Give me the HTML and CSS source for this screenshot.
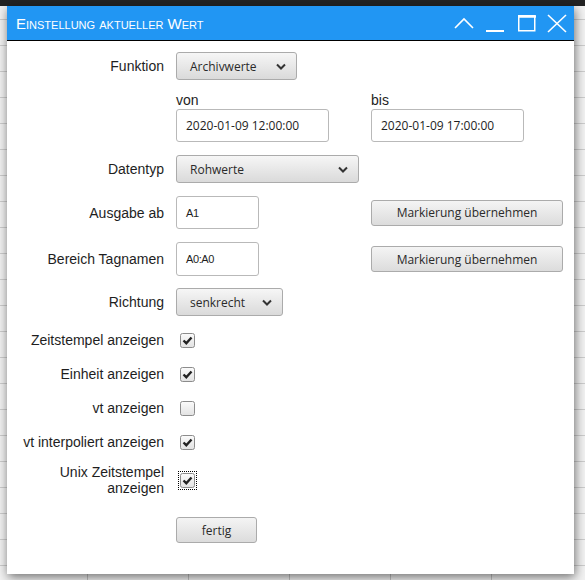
FILE: index.html
```html
<!DOCTYPE html>
<html lang="de">
<head>
<meta charset="utf-8">
<title>Einstellung aktueller Wert</title>
<link rel="stylesheet" href="styles.css">
</head>
<body>
<div class="topbar"></div>
<div class="dialog">
  <div class="titlebar">
    <span class="title">Einstellung aktueller Wert</span>
    <svg class="winctl" width="122" height="34" viewBox="0 0 122 34">
      <polyline points="3,22 12,13 21,22" fill="none" stroke="#fff" stroke-width="1.6"/>
      <line x1="34" y1="25" x2="52" y2="25" stroke="#fff" stroke-width="2"/>
      <rect x="66.75" y="9.75" width="16" height="15" fill="none" stroke="#fff" stroke-width="1.5"/>
      <line x1="66" y1="10.5" x2="84" y2="10.5" stroke="#fff" stroke-width="2.5"/>
      <line x1="96" y1="9" x2="114" y2="26" stroke="#fff" stroke-width="1.6"/>
      <line x1="114" y1="9" x2="96" y2="26" stroke="#fff" stroke-width="1.6"/>
    </svg>
  </div>
  <div class="form">
    <div class="row r-funktion">
      <div class="label">Funktion</div>
      <div class="select w-funktion"><span>Archivwerte</span><svg class="chev" width="10" height="7" viewBox="0 0 10 7"><polyline points="1,1.5 5,5.5 9,1.5" fill="none" stroke="#333" stroke-width="2"/></svg></div>
    </div>
    <div class="row r-range">
      <div class="label"></div>
      <div class="range">
        <div class="rangecol">
          <div class="sublabel">von</div>
          <div class="input date">2020-01-09 12:00:00</div>
        </div>
        <div class="rangecol">
          <div class="sublabel">bis</div>
          <div class="input date">2020-01-09 17:00:00</div>
        </div>
      </div>
    </div>
    <div class="row r-sel">
      <div class="label">Datentyp</div>
      <div class="select w-datentyp"><span>Rohwerte</span><svg class="chev" width="10" height="7" viewBox="0 0 10 7"><polyline points="1,1.5 5,5.5 9,1.5" fill="none" stroke="#333" stroke-width="2"/></svg></div>
    </div>
    <div class="row r-input">
      <div class="label">Ausgabe ab</div>
      <div class="input cell">A1</div>
      <div class="button mark">Markierung übernehmen</div>
    </div>
    <div class="row r-input2">
      <div class="label">Bereich Tagnamen</div>
      <div class="input cell">A0:A0</div>
      <div class="button mark">Markierung übernehmen</div>
    </div>
    <div class="row r-sel2">
      <div class="label">Richtung</div>
      <div class="select w-richtung"><span>senkrecht</span><svg class="chev" width="10" height="7" viewBox="0 0 10 7"><polyline points="1,1.5 5,5.5 9,1.5" fill="none" stroke="#333" stroke-width="2"/></svg></div>
    </div>
    <div class="checks">
      <div class="row r-check">
        <div class="label">Zeitstempel anzeigen</div>
        <svg class="cb" width="15" height="15" viewBox="0 0 15 15"><defs><linearGradient id="g1" x1="0" y1="0" x2="0" y2="1"><stop offset="0" stop-color="#fbfbfb"/><stop offset="1" stop-color="#e2e2e2"/></linearGradient></defs><rect x="0.5" y="0.5" width="14" height="14" rx="2" fill="url(#g1)" stroke="#8c8c8c"/><polyline points="3.5,7.5 6.3,10.2 11.5,4.5" fill="none" stroke="#222" stroke-width="2.4"/></svg>
      </div>
      <div class="row r-check">
        <div class="label">Einheit anzeigen</div>
        <svg class="cb" width="15" height="15" viewBox="0 0 15 15"><rect x="0.5" y="0.5" width="14" height="14" rx="2" fill="url(#g1)" stroke="#8c8c8c"/><polyline points="3.5,7.5 6.3,10.2 11.5,4.5" fill="none" stroke="#222" stroke-width="2.4"/></svg>
      </div>
      <div class="row r-check">
        <div class="label">vt anzeigen</div>
        <svg class="cb" width="15" height="15" viewBox="0 0 15 15"><rect x="0.5" y="0.5" width="14" height="14" rx="2" fill="url(#g1)" stroke="#8c8c8c"/></svg>
      </div>
      <div class="row r-check">
        <div class="label">vt interpoliert anzeigen</div>
        <svg class="cb" width="15" height="15" viewBox="0 0 15 15"><rect x="0.5" y="0.5" width="14" height="14" rx="2" fill="url(#g1)" stroke="#8c8c8c"/><polyline points="3.5,7.5 6.3,10.2 11.5,4.5" fill="none" stroke="#222" stroke-width="2.4"/></svg>
      </div>
      <div class="row r-check r-unix">
        <div class="label">Unix Zeitstempel<br>anzeigen</div>
        <svg class="cb focus" width="15" height="15" viewBox="0 0 15 15"><rect x="0.5" y="0.5" width="14" height="14" rx="2" fill="url(#g1)" stroke="#8c8c8c"/><polyline points="3.5,7.5 6.3,10.2 11.5,4.5" fill="none" stroke="#222" stroke-width="2.4"/></svg>
      </div>
    </div>
    <div class="row r-done">
      <div class="label"></div>
      <div class="button done">fertig</div>
    </div>
  </div>
</div>
</body>
</html>
```
FILE: styles.css
```css
html, body {
  margin: 0;
  padding: 0;
  height: 100%;
  overflow: hidden;
}
body {
  background-color: #f2f2f2;
  background-image:
    repeating-linear-gradient(to bottom, transparent 0 19px, #cdcdcd 19px 20px, transparent 20px 26px),
    repeating-linear-gradient(to right, transparent 0 87px, #c4c4c4 87px 88px, transparent 88px 101px);
  font-family: "Liberation Sans", Arial, sans-serif;
}
.topbar {
  height: 6px;
  background: #232323;
}
.dialog {
  margin-left: 7px;
  width: 567px;
  height: 568px;
  background: #fff;
  box-shadow: 1px 3px 10px rgba(0, 0, 0, 0.55);
  position: relative;
}
.titlebar {
  height: 34px;
  background: #2196f3;
  border-bottom: 1px solid #000;
  display: flex;
  align-items: center;
}
.title {
  padding-left: 9px;
  color: #fff;
  font-size: 15px;
  font-variant: small-caps;
}
.winctl {
  margin-left: auto;
  display: block;
}
.form {
  padding-top: 11px;
}
.row {
  display: flex;
  align-items: center;
}
.label {
  width: 157px;
  margin-right: 12px;
  flex: none;
  text-align: right;
  font-size: 14px;
  color: #1e1e1e;
  line-height: 16px;
}
.r-funktion { height: 28px; }
.r-range { margin-top: 12px; align-items: flex-start; }
.range { display: flex; }
.rangecol { width: 195px; }
.sublabel {
  font-size: 14px;
  line-height: 17px;
  color: #1e1e1e;
}
.r-sel { margin-top: 13px; height: 28px; }
.r-input { margin-top: 13px; height: 33px; }
.r-input2 { margin-top: 13px; height: 34px; }
.r-sel2 { margin-top: 12px; height: 28px; }
.checks { margin-top: 7px; }
.r-check { height: 34px; }
.r-unix { height: 42px; }
.r-done { margin-top: 16px; }

.select {
  box-sizing: border-box;
  height: 28px;
  border: 1px solid #ababab;
  border-radius: 3px;
  background: linear-gradient(#f6f6f6, #dadada);
  display: flex;
  align-items: center;
  padding: 0 10px 0 13px;
  font-family: "Open Sans", sans-serif;
  font-size: 12px;
  color: #2a2a2a;
}
.select .chev { margin-left: auto; display: block; }
.w-funktion { width: 121px; }
.w-datentyp { width: 183px; }
.w-richtung { width: 107px; }

.input {
  box-sizing: border-box;
  border: 1px solid #b9b9b9;
  border-radius: 3px;
  background: #fff;
  display: flex;
  align-items: center;
  padding-left: 9px;
  color: #1e1e1e;
}
.date {
  width: 153px;
  height: 33px;
  font-family: "Open Sans", sans-serif;
  font-size: 12px;
}
.cell {
  width: 83px;
  height: 100%;
  font-family: "Liberation Sans", Arial, sans-serif;
  font-size: 11px;
  letter-spacing: -0.4px;
}
.button {
  box-sizing: border-box;
  height: 26px;
  border: 1px solid #ababab;
  border-radius: 3px;
  background: linear-gradient(#f4f4f4, #dcdcdc);
  display: flex;
  align-items: center;
  justify-content: center;
  font-family: "Open Sans", sans-serif;
  font-size: 12px;
  color: #2a2a2a;
}
.mark {
  width: 192px;
  margin-left: 112px;
}
.done { width: 81px; }
.cb {
  display: block;
  margin-left: 4px;
}
.cb.focus {
  outline: 1px dotted #000;
  outline-offset: 1px;
}
```
